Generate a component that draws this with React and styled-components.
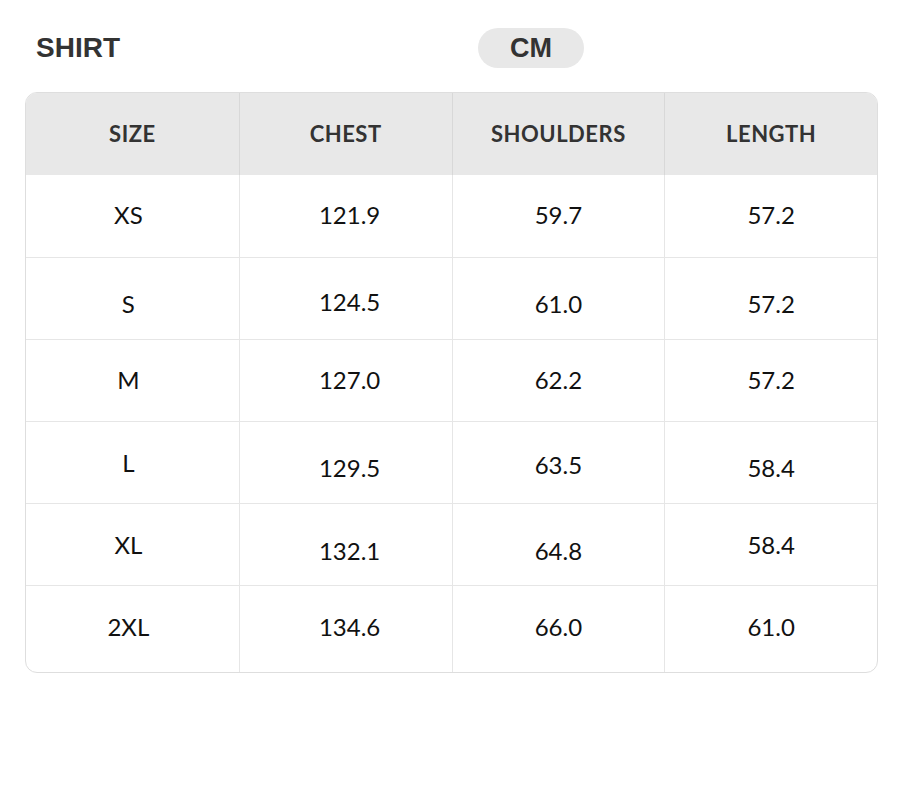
import React from 'react';
import styled, { createGlobalStyle } from 'styled-components';

const GlobalStyle = createGlobalStyle`
  html, body {
    margin: 0;
    padding: 0;
    background: #fff;
  }
  body {
    font-family: Lato, "Liberation Sans", sans-serif;
    color: #222;
  }
`;

const Page = styled.div`
  width: 900px;
  height: 800px;
  padding: 28px 22px 0 25px;
  box-sizing: border-box;
`;

const TopBar = styled.div`
  display: flex;
  align-items: center;
  height: 40px;
  margin-bottom: 24px;
`;

const Title = styled.div`
  font-family: "Liberation Sans", Arial, sans-serif;
  font-weight: 700;
  font-size: 28px;
  color: #333;
  padding-left: 11px;
  width: 453px;
  box-sizing: border-box;
`;

const UnitPill = styled.div`
  width: 106px;
  height: 40px;
  border-radius: 20px;
  background: #e8e8e8;
  display: flex;
  align-items: center;
  justify-content: center;
  font-family: "Liberation Sans", Arial, sans-serif;
  font-weight: 700;
  font-size: 27px;
  color: #333;
`;

const Table = styled.div`
  display: grid;
  grid-template-columns: repeat(4, 1fr);
  border: 1px solid #dedede;
  border-radius: 12px;
  overflow: hidden;
  width: 853px;
  box-sizing: border-box;
`;

const HeadCell = styled.div`
  height: 82px;
  background: #e8e8e8;
  display: flex;
  align-items: center;
  justify-content: center;
  font-family: Lato, sans-serif;
  font-weight: 700;
  font-size: 22px;
  letter-spacing: 0.5px;
  color: #333;
  border-left: ${p => (p.$first ? 'none' : '1px solid #d8d8d8')};
  padding-bottom: 2px;
  box-sizing: border-box;
`;

const Cell = styled.div`
  height: ${p => (p.$last ? 87 : 82)}px;
  display: flex;
  align-items: center;
  justify-content: center;
  font-family: Lato, sans-serif;
  font-size: 24px;
  color: #111;
  border-top: ${p => (p.$topLine ? '1px solid #e6e6e6' : 'none')};
  border-left: ${p => (p.$first ? 'none' : '1px solid #e6e6e6')};
  box-sizing: border-box;
`;

const Value = styled.span`
  position: relative;
  top: ${p => p.$shift || 0}px;
  left: ${p => p.$nudge || 0}px;
`;

const headers = ['SIZE', 'CHEST', 'SHOULDERS', 'LENGTH'];

// [text, vertical shift]
const rows = [
  [['XS', -2], ['121.9', -2], ['59.7', -2], ['57.2', -2]],
  [['S', 5], ['124.5', 3], ['61.0', 5], ['57.2', 5]],
  [['M', -1], ['127.0', -1], ['62.2', -1], ['57.2', -1]],
  [['L', 0], ['129.5', 5], ['63.5', 2], ['58.4', 5]],
  [['XL', 0], ['132.1', 6], ['64.8', 6], ['58.4', 0]],
  [['2XL', -3], ['134.6', -3], ['66.0', -3], ['61.0', -3]],
];

const nudges = [-4, 4, 0, 0];

export default function App() {
  return (
    <>
      <GlobalStyle />
      <Page>
        <TopBar>
          <Title>SHIRT</Title>
          <UnitPill>CM</UnitPill>
        </TopBar>
        <Table>
          {headers.map((h, i) => (
            <HeadCell key={h} $first={i === 0}>{h}</HeadCell>
          ))}
          {rows.map((row, r) =>
            row.map(([text, shift], c) => (
              <Cell
                key={`${r}-${c}`}
                $first={c === 0}
                $topLine={r > 0}
                $last={r === rows.length - 1}
              >
                <Value $shift={shift} $nudge={nudges[c]}>{text}</Value>
              </Cell>
            )),
          )}
        </Table>
      </Page>
    </>
  );
}
